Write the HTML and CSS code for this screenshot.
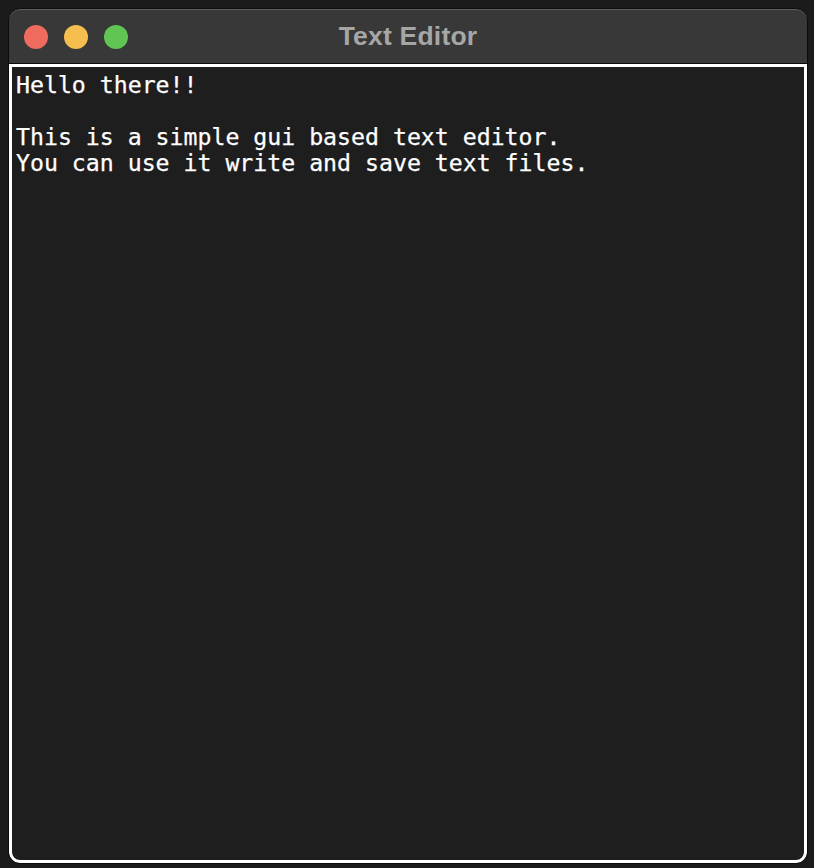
FILE: index.html
```html
<!DOCTYPE html>
<html>
<head>
<meta charset="utf-8">
<title>Text Editor</title>
<link rel="stylesheet" href="styles.css">
</head>
<body>
<div class="window">
  <div class="titlebar">
    <div class="lights">
      <span class="light red"></span>
      <span class="light yellow"></span>
      <span class="light green"></span>
    </div>
    <div class="title">Text Editor</div>
  </div>
  <div class="editor">
    <pre class="text">Hello there!!

This is a simple gui based text editor.
You can use it write and save text files.</pre>
  </div>
</div>
</body>
</html>
```

FILE: styles.css
```css
html, body {
  margin: 0;
  padding: 0;
  background: #1b1b1b;
}

body {
  width: 814px;
  height: 868px;
  padding: 8px 0 0 8px;
  box-sizing: border-box;
}

.window {
  width: 800px;
  height: 856px;
  box-sizing: border-box;
  border-radius: 12px;
  background: #383838;
  border: 1px solid #0c0c0c;
  box-shadow: inset 0 1px 0 #5e5e5e;
  display: flex;
  flex-direction: column;
  overflow: hidden;
}

.titlebar {
  height: 55px;
  flex: none;
  display: grid;
  grid-template-columns: 1fr;
  align-items: center;
  border-bottom: 1px solid #0c0c0c;
  box-sizing: border-box;
}

.lights,
.title {
  grid-row: 1;
  grid-column: 1;
}

.lights {
  display: flex;
  gap: 16px;
  padding-left: 15px;
  padding-top: 1px;
}

.light {
  width: 24px;
  height: 24px;
  border-radius: 50%;
  display: block;
}

.red { background: #ef6b5e; }
.yellow { background: #f5be4f; }
.green { background: #60c553; }

.title {
  text-align: center;
  font-family: "Liberation Sans", Arial, sans-serif;
  font-weight: bold;
  font-size: 26.5px;
  letter-spacing: 0.2px;
  color: #a6a6a6;
  padding-top: 0;
}

.editor {
  flex: 1;
  margin: 0;
  border: 3px solid #ffffff;
  border-radius: 0 0 11px 11px;
  background: #1e1e1e;
  padding: 5px 4px 3px;
}

.text {
  margin: 0;
  font-family: "DejaVu Sans Mono", monospace;
  font-size: 23.2px;
  line-height: 26px;
  color: #ffffff;
  -webkit-text-stroke: 0.25px #ffffff;
}
```
